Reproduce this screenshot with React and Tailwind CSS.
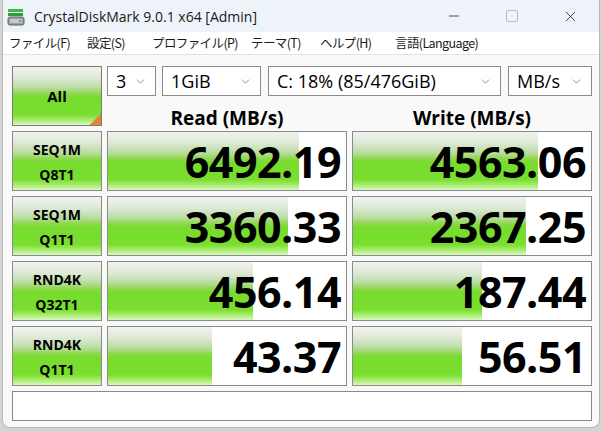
import { ChevronDown, Minus, X } from 'lucide-react';

const green =
  'bg-[linear-gradient(to_bottom,#f1f3ef_0%,#dfe9d8_18%,#b9dca0_36%,#8ed84c_46%,#78dc2e_52%,#7ade2f_82%,#a6ec6a_91%,#daf8c4_100%)]';

const rows = [
  { name: 'SEQ1M', sub: 'Q8T1', read: '6492.19', readW: 191, write: '4563.06', writeW: 185 },
  { name: 'SEQ1M', sub: 'Q1T1', read: '3360.33', readW: 180, write: '2367.25', writeW: 173 },
  { name: 'RND4K', sub: 'Q32T1', read: '456.14', readW: 145, write: '187.44', writeW: 129 },
  { name: 'RND4K', sub: 'Q1T1', read: '43.37', readW: 104, write: '56.51', writeW: 109 },
];

const menu = [
  { label: 'ファイル(F)', w: 'w-[58px]' },
  { label: '設定(S)', w: 'w-[45px]' },
  { label: 'プロファイル(P)', w: 'w-[79px]' },
  { label: 'テーマ(T)', w: 'w-[49px]' },
  { label: 'ヘルプ(H)', w: 'w-[55px]' },
  { label: '言語(Language)', w: 'w-[102px]' },
];

const AppIcon = () => (
  <svg width="18" height="18" viewBox="0 0 18 18">
    <rect x="1" y="1" width="15" height="3" fill="#3fb54a" />
    <rect x="1" y="5" width="15" height="3" fill="#2e9e3a" />
    <rect x="1" y="9" width="16" height="8" rx="2" fill="#9aa0a6" stroke="#5f6368" />
    <rect x="3" y="11" width="12" height="4" rx="1" fill="#c4c8cc" />
    <rect x="12" y="12" width="2" height="2" fill="#3fb54a" />
  </svg>
);

const Select = ({ value, w }) => (
  <div
    className={`flex h-[30px] items-center justify-between border border-[#8a8a8a] bg-white pl-2 pr-2 text-[18px] text-black ${w}`}
  >
    <span className="leading-none">{value}</span>
    <ChevronDown size={13} strokeWidth={1.5} className="text-[#777]" />
  </div>
);

const Score = ({ value, width }) => (
  <div className="relative h-[60px] overflow-hidden border border-[#8a8a8a] bg-white">
    <div className={`absolute inset-y-0 left-0 ${green}`} style={{ width }} />
    <div className="relative flex h-full items-center justify-end pr-[5px] text-[43px] font-bold leading-none tracking-[-0.5px] text-black">
      {value}
    </div>
  </div>
);

export default function App() {
  return (
    <div className="h-[432px] w-[602px] overflow-hidden bg-[#d4d4d4] font-['Open_Sans','Noto_Sans_CJK_JP',sans-serif]">
      <div className="ml-[2px] flex h-[428px] w-[598px] flex-col overflow-hidden rounded-b-lg border border-t-0 border-[#b8b8b8] bg-[#f9f9f9]">
        <div className="flex h-8 items-center bg-[#eef3f9]">
          <div className="ml-[4px] mt-[1px]">
            <AppIcon />
          </div>
          <span className="ml-[9px] text-[14px] text-[#1a1a1a]">CrystalDiskMark 9.0.1 x64 [Admin]</span>
          <div className="ml-auto flex items-center">
            <div className="flex w-[58px] justify-center">
              <Minus size={16} strokeWidth={1} className="text-black" />
            </div>
            <div className="flex w-[58px] justify-center">
              <div className="h-[12px] w-[12px] rounded-[2px] border border-[#bcbcbc]" />
            </div>
            <div className="flex w-[58px] justify-center">
              <X size={17} strokeWidth={1} className="text-black" />
            </div>
          </div>
        </div>
        <div className="flex h-[23px] items-center gap-[20px] border-b border-[#e2e2e2] bg-white pl-[6px] text-[12.5px] tracking-[-0.6px] text-[#1a1a1a] font-['Noto_Sans_CJK_JP',sans-serif]">
          {menu.map((m) => (
            <span key={m.label} className={`whitespace-nowrap ${m.w}`}>
              {m.label}
            </span>
          ))}
        </div>

        <div className="grid grid-cols-[90px_240px_240px] gap-[5px] pl-[9px] pt-[11px]">
          <div
            className={`relative flex h-[60px] items-center justify-center border border-[#7a7a7a] text-[15px] font-bold text-black ${green}`}
          >
            All
            <div className="absolute bottom-0 right-0 h-[11px] w-[11px] bg-[linear-gradient(135deg,transparent_50%,#e0873a_50%)]" />
          </div>
          <div className="col-span-2 flex h-[60px] flex-col">
            <div className="flex gap-[6px]">
              <Select value="3" w="w-[49px]" />
              <Select value="1GiB" w="w-[99px] ml-[0px]" />
              <Select value="C: 18% (85/476GiB)" w="w-[233px] ml-[1px]" />
              <Select value="MB/s" w="w-[84px] ml-[1px]" />
            </div>
            <div className="grid grid-cols-2 gap-[5px] pt-[11px]">
              <div className="text-center text-[19px] font-bold leading-[22px] text-black">Read (MB/s)</div>
              <div className="text-center text-[19px] font-bold leading-[22px] text-black">Write (MB/s)</div>
            </div>
          </div>

          {rows.map((r) => (
            <div key={r.name + r.sub} className="contents">
              <div
                className={`flex h-[60px] flex-col items-center justify-center border border-[#8a8a8a] pt-[2px] text-[14px] font-bold leading-[25px] text-black ${green}`}
              >
                <span>{r.name}</span>
                <span>{r.sub}</span>
              </div>
              <Score value={r.read} width={r.readW} />
              <Score value={r.write} width={r.writeW} />
            </div>
          ))}

          <div className="col-span-3 h-[30px] border border-[#8a8a8a] bg-white" />
        </div>
      </div>
    </div>
  );
}
